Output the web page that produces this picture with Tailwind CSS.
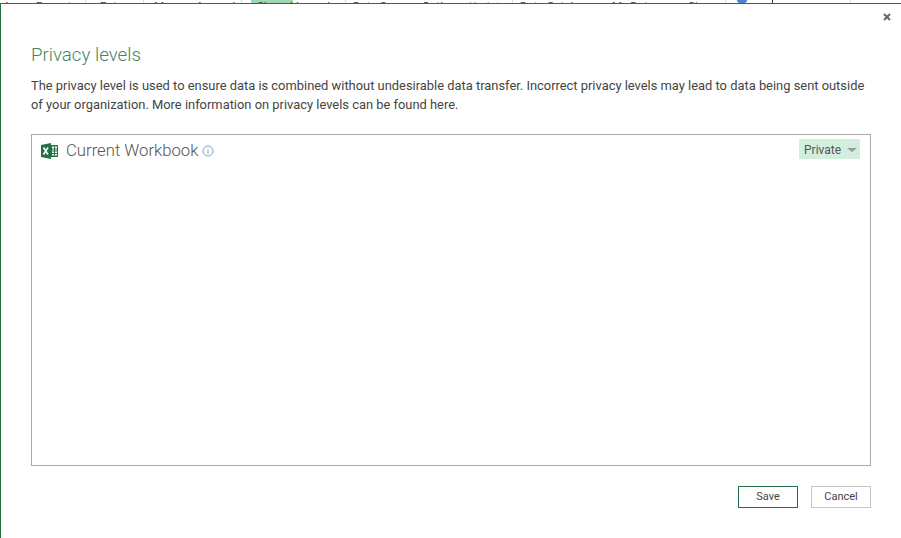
<!DOCTYPE html>
<html>
<head>
<meta charset="utf-8">
<script src="https://cdn.jsdelivr.net/npm/@tailwindcss/browser@4"></script>
</head>
<body class="bg-white">
<div class="w-[901px] h-[538px] overflow-hidden flex flex-col bg-white font-['Roboto',sans-serif] text-[#444]">
  <div class="h-[3px] shrink-0 overflow-hidden flex items-start text-[11.5px] leading-[14px] text-[#444] bg-white whitespace-nowrap">
    <div class="w-[86px] h-[3px] shrink-0 flex border-r border-[#ddd]"><span class="w-[12px] -mt-[1px] flex justify-end">Web</span><span class="ml-[24px] -mt-[1px]">Recent</span></div>
    <div class="w-[58px] h-[3px] shrink-0 pl-[14px] border-r border-[#ddd]"><span class="block -mt-[1px]">Enter</span></div>
    <div class="w-[98px] h-[3px] shrink-0 pl-[10px] flex border-r border-[#ddd]"><span class="w-[42px] -mt-[1px]">Merge</span><span class="-mt-[1px]">Append</span></div>
    <div class="w-[9px] h-[3px] shrink-0"></div>
    <div class="w-[42px] h-[3px] shrink-0 pl-[6px] bg-[#9fd5b1]"><span class="block -mt-[1px]">Shared</span></div>
    <div class="w-[53px] h-[3px] shrink-0 pl-[3px] border-r border-[#ddd]"><span class="block -mt-[1px]">Launch</span></div>
    <div class="w-[167px] h-[3px] shrink-0 pl-[7px] flex border-r border-[#ddd]"><span class="w-[69px] -mt-[1px]">Data Source</span><span class="w-[47px] -mt-[1px]">Options</span><span class="-mt-[1px] text-[#999]">Update</span></div>
    <div class="w-[213px] h-[3px] shrink-0 pl-[7px] flex border-r border-[#ddd]"><span class="w-[92px] -mt-[1px]">Data Catalog</span><span class="w-[76px] -mt-[1px]">My Data</span><span class="-mt-[1px]">Sign</span></div>
    <div class="w-[125px] h-[3px] shrink-0 pl-[11px] flex border-r border-[#ddd]"><span class="w-[10px] h-[3px] rounded-b-full bg-[#4a86c8]"></span><span class="ml-[25px] w-[1px] h-[3px] bg-[#333]"></span></div>
  </div>
  <div class="flex-1 min-h-0 border-t border-t-[#217346] border-l border-l-[#217346] bg-white flex flex-col pl-[30px] pr-[30px] relative">
    <button class="absolute right-[9px] top-[8px] w-[10px] h-[10px]">
      <svg viewBox="0 0 10 10" class="w-[10px] h-[10px]"><path d="M2 2 8 8M8 2 2 8" stroke="#666" stroke-width="2" fill="none"/></svg>
    </button>
    <h1 class="mt-[37px] text-[18.7px] leading-[28px] font-light text-[#3f8466]">Privacy levels</h1>
    <p class="mt-[7px] text-[12.9px] leading-[19px] text-[#444]">The privacy level is used to ensure data is combined without undesirable data transfer. Incorrect privacy levels may lead to data being sent outside of your organization. More information on privacy levels can be found here.</p>
    <div class="mt-[20px] h-[332px] border border-[#a9a9a9] flex items-start justify-between pl-[9px] pr-[10px] pt-[4px]">
      <div class="flex items-center">
        <svg viewBox="0 0 17 16" class="w-[17px] h-[16px]">
          <path d="M0 2 10 0V16L0 14Z" fill="#217346"/>
          <path d="M10 2H17V14H10Z" fill="#217346"/>
          <path d="M11 3.5H16V12.500H11Z" fill="#fff"/>
          <path d="M13.500 3.500V12.500M11 6H16M11 8H16M11 10.500H16" stroke="#217346" stroke-width="1" fill="none"/>
          <path d="M2.500 4.500 7 11.500M7 4.500 2.500 11.500" stroke="#fff" stroke-width="1.600" fill="none"/>
        </svg>
        <span class="ml-[8px] text-[16.7px] leading-[24px] font-light text-[#555]">Current Workbook</span>
        <svg viewBox="0 0 12 12" class="ml-[4px] w-[12px] h-[12px]">
          <circle cx="6" cy="6" r="5" fill="none" stroke="#7fa6cf" stroke-width="1"/>
          <path d="M6 5V9M6 3V4" stroke="#7fa6cf" stroke-width="1" fill="none"/>
        </svg>
      </div>
      <button class="flex items-center h-[20px] w-[61px] pl-[5px] pt-px bg-[#d2eedd] text-[12px] text-[#555]">
        <span>Private</span>
        <span class="ml-[6px] w-0 h-0 border-l-[5px] border-r-[5px] border-t-[4px] border-l-transparent border-r-transparent border-t-[#999]"></span>
      </button>
    </div>
    <div class="mt-[20px] flex justify-end gap-[13px]">
      <button class="w-[60px] h-[22px] border border-[#217346] text-[11px] text-[#444] bg-white">Save</button>
      <button class="w-[60px] h-[22px] border border-[#c6c6c6] text-[11px] text-[#444] bg-white">Cancel</button>
    </div>
  </div>
</div>
</body>
</html>
